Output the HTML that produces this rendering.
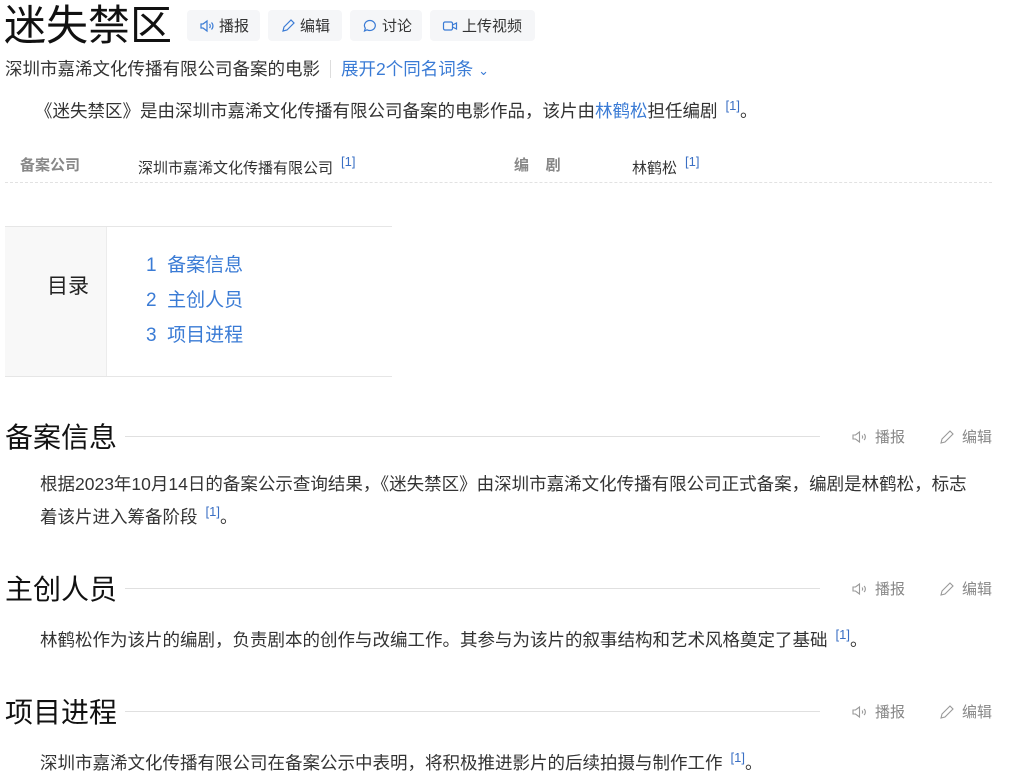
<!DOCTYPE html>
<html><head><meta charset="utf-8"><style>
*{margin:0;padding:0;box-sizing:border-box}
body{width:1010px;height:779px;overflow:hidden;background:#fff;font-family:"Liberation Sans","Noto Sans CJK SC",sans-serif;color:#333;position:relative}
.a{position:absolute;white-space:nowrap}
.btn{position:absolute;top:10px;height:31px;background:#f5f6f8;border-radius:4px;font-size:15px;color:#333;display:flex;align-items:center;padding-left:12px;gap:4px}
.btn svg{width:16px;height:16px}
.blue{color:#3a7bd5}
sup{font-size:13px;color:#3a6fc4;vertical-align:7px;margin-left:8px}
.p{font-size:17.5px;color:#333;line-height:28px}
.h{position:absolute;left:5px;font-size:28px;color:#111}
.line{position:absolute;left:125px;width:695px;height:1px;background:#e0e0e0}
.tool{position:absolute;font-size:15px;color:#888;display:flex;align-items:center;gap:6px}
.tool svg{width:18px;height:18px}
.toc{position:absolute;left:146px;font-size:19px;color:#3a7bd5}
</style></head><body>
<div class="a" style="left:4px;top:0px;font-size:42px;color:#111;line-height:52px">迷失禁区</div>
<div class="btn" style="left:187px;width:73px"><svg viewBox="0 0 16 16" fill="none" stroke="#3a7bd5" stroke-width="1.2"><path d="M2 6h2l4-3v10l-4-3H2z"/><path d="M10.5 6a3 3 0 0 1 0 4M12.5 4.5a5 5 0 0 1 0 7"/></svg>播报</div>
<div class="btn" style="left:268px;width:74px"><svg viewBox="0 0 16 16" fill="none" stroke="#3a7bd5" stroke-width="1.2"><path d="M3 13l1-4 7-7 3 3-7 7z"/></svg>编辑</div>
<div class="btn" style="left:350px;width:72px"><svg viewBox="0 0 16 16" fill="none" stroke="#3a7bd5" stroke-width="1.2"><path d="M8 2.5a5.5 5 0 1 1-3 9.3L2.5 13l.8-2.8A5.5 5 0 0 1 8 2.5z"/></svg>讨论</div>
<div class="btn" style="left:430px;width:105px"><svg viewBox="0 0 16 16" fill="none" stroke="#3a7bd5" stroke-width="1.2"><rect x="1.5" y="4" width="9" height="8" rx="1.5"/><path d="M10.5 7l4-2v6l-4-2"/></svg>上传视频</div>
<div class="a" style="left:5px;top:57px;font-size:17.5px;line-height:24px">深圳市嘉浠文化传播有限公司备案的电影<span style="display:inline-block;width:1px;height:18px;background:#ddd;margin:0 10px;vertical-align:-3px"></span><span class="blue">展开2个同名词条 <span style="font-size:13px">&#8964;</span></span></div>
<div class="a p" style="left:5px;top:92px;text-indent:30px">《迷失禁区》是由深圳市嘉浠文化传播有限公司备案的电影作品，该片由<span class="blue">林鹤松</span>担任编剧<sup>[1]</sup>。</div>
<div class="a" style="left:20px;top:154px;font-size:15px;color:#888;font-weight:bold">备案公司</div>
<div class="a" style="left:138px;top:154px;font-size:15px">深圳市嘉浠文化传播有限公司<sup>[1]</sup></div>
<div class="a" style="left:514px;top:154px;font-size:15px;color:#888;font-weight:bold">编&nbsp;&nbsp;&nbsp;&nbsp;剧</div>
<div class="a" style="left:632px;top:154px;font-size:15px">林鹤松<sup>[1]</sup></div>
<div class="a" style="left:5px;top:182px;width:987px;border-top:1px dashed #e2e2e2"></div>
<div class="a" style="left:5px;top:226px;width:387px;height:151px;border-top:1px solid #e6e6e6;border-bottom:1px solid #e6e6e6"></div>
<div class="a" style="left:5px;top:227px;width:102px;height:149px;background:#f8f8f8;border-right:1px solid #ececec"></div>
<div class="a" style="left:47px;top:270px;font-size:21px;color:#222">目录</div>
<div class="toc" style="top:250px">1&nbsp; 备案信息</div>
<div class="toc" style="top:285px">2&nbsp; 主创人员</div>
<div class="toc" style="top:320px">3&nbsp; 项目进程</div>

<div class="h" style="top:416px">备案信息</div><div class="line" style="top:436px"></div>
<div class="h" style="top:568px">主创人员</div><div class="line" style="top:588px"></div>
<div class="h" style="top:691px">项目进程</div><div class="line" style="top:711px"></div>

<div class="tool" style="left:851px;top:426px"><svg viewBox="0 0 18 18" fill="none" stroke="#999" stroke-width="1.1"><path d="M2 7h2.5l4-3v10l-4-3H2z"/><path d="M11 7.5a2 2 0 0 1 0 3M13 6a4 4 0 0 1 0 6"/></svg>播报</div>
<div class="tool" style="left:938px;top:426px"><svg viewBox="0 0 18 18" fill="none" stroke="#999" stroke-width="1.1"><path d="M3 15l1-4 8-8 3 3-8 8z"/></svg>编辑</div>
<div class="tool" style="left:851px;top:578px"><svg viewBox="0 0 18 18" fill="none" stroke="#999" stroke-width="1.1"><path d="M2 7h2.5l4-3v10l-4-3H2z"/><path d="M11 7.5a2 2 0 0 1 0 3M13 6a4 4 0 0 1 0 6"/></svg>播报</div>
<div class="tool" style="left:938px;top:578px"><svg viewBox="0 0 18 18" fill="none" stroke="#999" stroke-width="1.1"><path d="M3 15l1-4 8-8 3 3-8 8z"/></svg>编辑</div>
<div class="tool" style="left:851px;top:701px"><svg viewBox="0 0 18 18" fill="none" stroke="#999" stroke-width="1.1"><path d="M2 7h2.5l4-3v10l-4-3H2z"/><path d="M11 7.5a2 2 0 0 1 0 3M13 6a4 4 0 0 1 0 6"/></svg>播报</div>
<div class="tool" style="left:938px;top:701px"><svg viewBox="0 0 18 18" fill="none" stroke="#999" stroke-width="1.1"><path d="M3 15l1-4 8-8 3 3-8 8z"/></svg>编辑</div>

<div class="a p" style="left:40px;top:470px;width:935px;white-space:normal">根据2023年10月14日的备案公示查询结果，《迷失禁区》由深圳市嘉浠文化传播有限公司正式备案，编剧是林鹤松，标志着该片进入筹备阶段<sup>[1]</sup>。</div>
<div class="a p" style="left:40px;top:621px">林鹤松作为该片的编剧，负责剧本的创作与改编工作。其参与为该片的叙事结构和艺术风格奠定了基础<sup>[1]</sup>。</div>
<div class="a p" style="left:40px;top:744px">深圳市嘉浠文化传播有限公司在备案公示中表明，将积极推进影片的后续拍摄与制作工作<sup>[1]</sup>。</div>
</body></html>
